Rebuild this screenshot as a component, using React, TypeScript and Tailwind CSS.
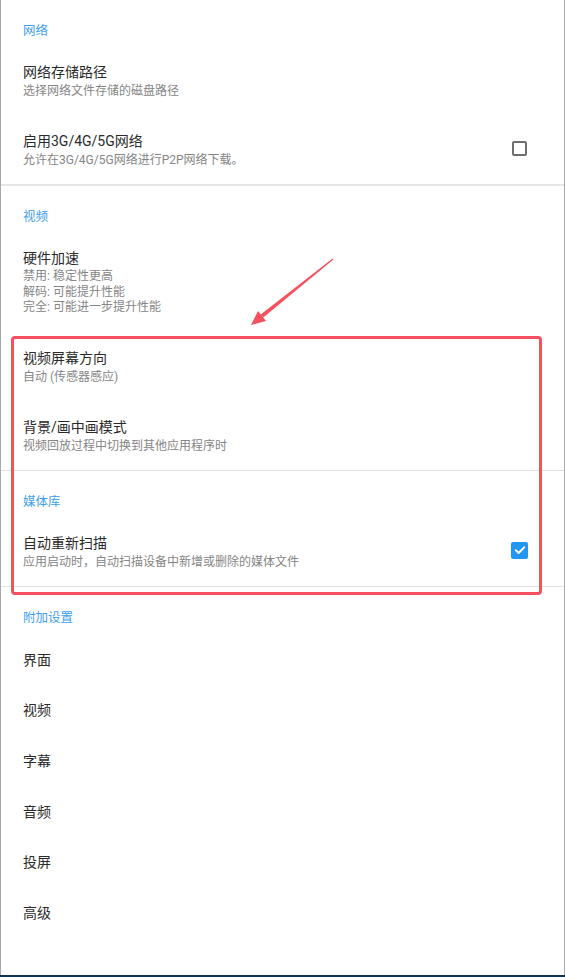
const font = { fontFamily: 'Roboto, "Noto Sans CJK SC", sans-serif' };

function Header({ text, last }: { text: string; last?: boolean }) {
    return (
        <div className={`pl-[22px] pt-[22px] ${last ? "pb-2" : "pb-[6px]"}`}>
            <span className="block text-[12.5px] leading-[18px] text-[#3d9ef0]">{text}</span>
        </div>
    );
}

function Item({ title, lines, control }: { title: string; lines?: string[]; control?: "off" | "on" }) {
    return (
        <div className="flex items-center pl-[22px] pr-[36px] py-4">
            <div className="flex-1">
                <div className="text-[14px] leading-[20px] text-[#2a2a2a]">{title}</div>
                {lines && (
                    <div className={`text-[12px] text-[#858585] mt-[1px] ${lines.length > 1 ? "leading-[15.5px]" : "leading-[16px]"}`}>
                        {lines.map((l) => (
                            <div key={l}>{l}</div>
                        ))}
                    </div>
                )}
            </div>
            {control === "off" && (
                <div className="w-[15px] h-[15px] border-2 border-[#6e6e6e] rounded-[2px] mr-[1px] mb-[2px]" />
            )}
            {control === "on" && (
                <div className="w-[17px] h-[17px] rounded-[2px] bg-[#2196f3] flex items-center justify-center mb-[2px]">
                    <svg width="12" height="12" viewBox="0 0 12 12" fill="none">
                        <path d="M1.8 6.2 L4.7 9 L10.3 3.2" stroke="white" strokeWidth="1.9" strokeLinecap="round" strokeLinejoin="round" />
                    </svg>
                </div>
            )}
        </div>
    );
}

function Simple({ title }: { title: string }) {
    return (
        <div className="h-[50.6px] flex items-center pl-[22px]">
            <span className="text-[14px] leading-[20px] text-[#2a2a2a]">{title}</span>
        </div>
    );
}

export default function App() {
    return (
        <div className="w-[565px] h-[977px] flex flex-col bg-white" style={font}>
            <div className="relative flex-1 border-l border-r border-[#a8a8a8] overflow-hidden">

                {/* 网络 */}
                <Header text="网络" />
                <Item title="网络存储路径" lines={["选择网络文件存储的磁盘路径"]} />
                <Item title="启用3G/4G/5G网络" lines={["允许在3G/4G/5G网络进行P2P网络下载。"]} control="off" />
                <div className="h-[2px] bg-[#e6e6e6]" />

                {/* 视频 */}
                <Header text="视频" />
                <Item title="硬件加速" lines={["禁用: 稳定性更高", "解码: 可能提升性能", "完全: 可能进一步提升性能"]} />
                <Item title="视频屏幕方向" lines={["自动 (传感器感应)"]} />
                <Item title="背景/画中画模式" lines={["视频回放过程中切换到其他应用程序时"]} />
                <div className="h-px bg-[#e2e2e2]" />

                {/* 媒体库 */}
                <Header text="媒体库" />
                <Item title="自动重新扫描" lines={["应用启动时，自动扫描设备中新增或删除的媒体文件"]} control="on" />
                <div className="h-px bg-[#e2e2e2]" />

                {/* 附加设置 */}
                <Header text="附加设置" last />
                <Simple title="界面" />
                <Simple title="视频" />
                <Simple title="字幕" />
                <Simple title="音频" />
                <Simple title="投屏" />
                <Simple title="高级" />

                {/* annotation box */}
                <div className="absolute left-[10px] top-[336px] w-[531px] h-[259px] border-[3px] border-[#f5505f] rounded-[4px] pointer-events-none" />

                {/* annotation arrow */}
                <svg className="absolute left-[-1px] top-0 pointer-events-none" width="565" height="400" viewBox="0 0 565 400">
                    <polygon points="333.4,259.5 332.6,258.5 260.7,314.4 263.3,317.6" fill="#f7505f" />
                    <polygon points="251,325 258,311 266,321" fill="#f7505f" />
                </svg>
            </div>
            <div className="h-[2px] bg-[#0d3452]" />
        </div>
    );
}
